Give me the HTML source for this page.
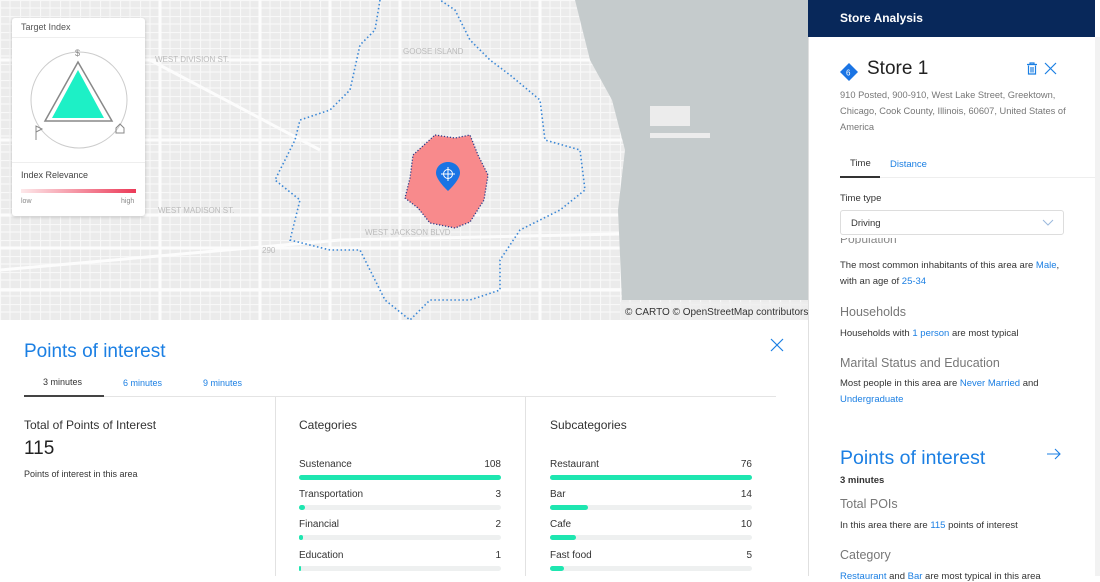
<!DOCTYPE html>
<html><head><meta charset="utf-8"><style>
*{box-sizing:border-box;margin:0;padding:0}
body{width:1100px;height:576px;overflow:hidden;font-family:"Liberation Sans",sans-serif;background:#fff;position:relative;color:#222}
.abs{position:absolute}
.blue{color:#1b7fe3}
.bar{position:absolute;height:5px;background:#eef0f0;border-radius:3px}
.bar i{display:block;height:5px;background:#1ee6b0;border-radius:3px}
.lbl{position:absolute;font-size:10px;color:#333}
.num{position:absolute;font-size:10px;color:#333;text-align:right}
</style></head><body>
<svg class="abs" style="left:0;top:0" width="808" height="320">
<defs>
<pattern id="g" width="20" height="16" patternUnits="userSpaceOnUse">
<rect width="20" height="16" fill="#ebebeb"/>
<path d="M0 0.5H20M0.5 0V16M10 0V16M0 8H20" stroke="#f8f8f8" stroke-width="1.2"/>
</pattern>
</defs>
<rect width="808" height="320" fill="url(#g)"/>
<g stroke="#fcfcfc" stroke-width="3">
<path d="M0 60H808M0 140H808M0 215H808M0 248H808M0 290H808M160 0V320M260 0V320M400 0V320M540 0V320M330 0V320"/>
<path d="M150 60L320 150M0 270L340 240L808 230" fill="none"/>
</g>
<path d="M575 0H808V300H622L618 210L625 150L612 100L590 60Z" fill="#c5cbcc"/>
<path d="M650 106H690V126H650ZM650 133H710V138H650Z" fill="#ececec"/>
<path d="M380 0L375 30L360 45L350 90L330 110L300 120L295 140L275 180L300 200L290 240L330 250L360 250L385 300L410 320L430 300L470 300L500 290L500 260L520 230L560 210L585 190L580 150L545 140L540 100L510 75L490 60L470 40L455 10L440 0" fill="none" stroke="#3a87d6" stroke-width="1.6" stroke-dasharray="1.5 2.5"/>
<path d="M435 135L455 138L470 135L478 155L488 175L484 200L470 222L455 228L430 223L418 208L405 198L410 178L413 155Z" fill="#f88a8c" stroke="#2b3d8a" stroke-width="1.3" stroke-dasharray="1.2 1.8"/>
<path d="M448 162c-7 0-12 5-12 11 0 7 12 18 12 18s12-11 12-18c0-6-5-11-12-11z" fill="#1a74e4"/>
<circle cx="448" cy="174" r="4.5" fill="none" stroke="#fff" stroke-width="1"/>
<path d="M441 174H455M448 167V181" stroke="#fff" stroke-width="1"/>
<rect x="620" y="302" width="188" height="18" fill="#eeeeee" opacity=".8"/>
<text x="625" y="315" font-size="10" fill="#333" font-family="Liberation Sans">© CARTO © OpenStreetMap contributors</text>
<g font-size="8" fill="#bbb" font-family="Liberation Sans"><text x="155" y="62">WEST DIVISION ST.</text><text x="158" y="213">WEST MADISON ST.</text><text x="403" y="54">GOOSE ISLAND</text><text x="365" y="235">WEST JACKSON BLVD</text><text x="262" y="253">290</text></g>
</svg>
<div class="abs" style="left:12px;top:18px;width:133px;height:198px;background:#fff;border-radius:3px;box-shadow:0 1px 3px rgba(0,0,0,.2)">
<div style="font-size:9px;color:#555;padding:4px 9px;height:20px;border-bottom:1px solid #eee">Target Index</div>
<svg class="abs" style="left:0;top:0" width="133" height="150">
<circle cx="67" cy="82" r="48" fill="none" stroke="#ccc"/>
<text x="63" y="38" font-size="9" fill="#888">$</text>
<path d="M66 44L33 103H100Z" fill="#fff" stroke="#888" stroke-width="1.5"/>
<path d="M66 52L40 100H92Z" fill="#1df0c6"/>
<path d="M24 122V108L30 111L24 114" fill="none" stroke="#888"/>
<path d="M104 115V110L108 106L112 110V115Z" fill="none" stroke="#888"/>
</svg>
<div class="abs" style="left:0;top:144px;width:133px;border-top:1px solid #eee"></div>
<div class="abs" style="left:9px;top:152px;font-size:9px;color:#444">Index Relevance</div>
<div class="abs" style="left:9px;top:171px;width:115px;height:4px;background:linear-gradient(90deg,#fde8ea,#ec3a58)"></div>
<div class="abs" style="left:9px;top:180px;font-size:7px;color:#888">low</div>
<div class="abs" style="left:109px;top:180px;font-size:7px;color:#888">high</div>
</div>

<div class="abs" style="left:24px;top:341px;font-size:19px" ><span class="blue">Points of interest</span></div>
<svg class="abs" style="left:770px;top:338px" width="14" height="14"><path d="M1 1L13 13M13 1L1 13" stroke="#1b7fe3" stroke-width="1.2"/></svg>
<div class="abs" style="left:43px;top:377px;font-size:9px;color:#333">3 minutes</div>
<div class="abs blue" style="left:123px;top:378px;font-size:9px">6 minutes</div>
<div class="abs blue" style="left:203px;top:378px;font-size:9px">9 minutes</div>
<div class="abs" style="left:24px;top:396px;width:752px;height:1px;background:#e4e4e4"></div>
<div class="abs" style="left:24px;top:395px;width:80px;height:2px;background:#444"></div>
<div class="abs" style="left:275px;top:397px;width:1px;height:179px;background:#e2e2e2"></div>
<div class="abs" style="left:525px;top:397px;width:1px;height:179px;background:#e2e2e2"></div>
<div class="abs" style="left:24px;top:418px;font-size:12px;color:#333">Total of Points of Interest</div>
<div class="abs" style="left:24px;top:438px;font-size:19px;color:#222">115</div>
<div class="abs" style="left:24px;top:469px;font-size:9px;color:#333">Points of interest in this area</div>
<div class="abs" style="left:299px;top:418px;font-size:12px;color:#333">Categories</div>
<div class="abs" style="left:550px;top:418px;font-size:12px;color:#333">Subcategories</div>

<div class="lbl" style="left:299px;top:459px">Sustenance</div><div class="num" style="left:460px;top:459px;width:41px">108</div>
<div class="bar" style="left:299px;top:475px;width:202px"><i style="width:100%"></i></div>
<div class="lbl" style="left:299px;top:489px">Transportation</div><div class="num" style="left:460px;top:489px;width:41px">3</div>
<div class="bar" style="left:299px;top:505px;width:202px"><i style="width:3%"></i></div>
<div class="lbl" style="left:299px;top:519px">Financial</div><div class="num" style="left:460px;top:519px;width:41px">2</div>
<div class="bar" style="left:299px;top:535px;width:202px"><i style="width:2%"></i></div>
<div class="lbl" style="left:299px;top:550px">Education</div><div class="num" style="left:460px;top:550px;width:41px">1</div>
<div class="bar" style="left:299px;top:566px;width:202px"><i style="width:1%"></i></div>

<div class="lbl" style="left:550px;top:459px">Restaurant</div><div class="num" style="left:712px;top:459px;width:40px">76</div>
<div class="bar" style="left:550px;top:475px;width:202px"><i style="width:100%"></i></div>
<div class="lbl" style="left:550px;top:489px">Bar</div><div class="num" style="left:712px;top:489px;width:40px">14</div>
<div class="bar" style="left:550px;top:505px;width:202px"><i style="width:19%"></i></div>
<div class="lbl" style="left:550px;top:519px">Cafe</div><div class="num" style="left:712px;top:519px;width:40px">10</div>
<div class="bar" style="left:550px;top:535px;width:202px"><i style="width:13%"></i></div>
<div class="lbl" style="left:550px;top:550px">Fast food</div><div class="num" style="left:712px;top:550px;width:40px">5</div>
<div class="bar" style="left:550px;top:566px;width:202px"><i style="width:7%"></i></div>

<div class="abs" style="left:808px;top:0;width:292px;height:576px;background:#fff;border-left:1px solid #e0e0e0"></div>
<div class="abs" style="left:1095px;top:37px;width:5px;height:539px;background:#f2f2f2"></div>
<div class="abs" style="left:808px;top:0;width:287px;height:37px;background:#08285a;color:#fff;font-size:12px;font-weight:bold;padding:11px 0 0 32px">Store Analysis</div>
<svg class="abs" style="left:839px;top:62px" width="20" height="20"><path d="M10 1L19 10L10 19L1 10Z" fill="#1a74e4"/><text x="7" y="13.5" font-size="8" fill="#fff">6</text></svg>
<div class="abs" style="left:867px;top:58px;font-size:19px;color:#222">Store 1</div>
<svg class="abs" style="left:1026px;top:62px" width="12" height="13"><path d="M1 2.5H11M4 2.5V1H8V2.5M2.5 3.5V12H9.5V3.5M5 5V10.5M7 5V10.5" fill="none" stroke="#1b7fe3" stroke-width="1.2"/></svg>
<svg class="abs" style="left:1044px;top:62px" width="13" height="13"><path d="M1 1L12 12M12 1L1 12" stroke="#1b7fe3" stroke-width="1.2"/></svg>
<div class="abs" style="left:840px;top:87px;width:228px;font-size:9.3px;line-height:16px;color:#777">910 Posted, 900-910, West Lake Street, Greektown, Chicago, Cook County, Illinois, 60607, United States of America</div>
<div class="abs" style="left:850px;top:158px;font-size:9.5px;color:#333">Time</div>
<div class="abs blue" style="left:890px;top:159px;font-size:9.5px">Distance</div>
<div class="abs" style="left:840px;top:176px;width:40px;height:2px;background:#333"></div>
<div class="abs" style="left:880px;top:177px;width:215px;height:1px;background:#eee"></div>
<div class="abs" style="left:840px;top:193px;font-size:9.5px;color:#333">Time type</div>
<div class="abs" style="left:840px;top:210px;width:224px;height:25px;border:1px solid #ddd;border-radius:3px;font-size:9.5px;color:#333;padding:7px 0 0 10px">Driving</div>
<svg class="abs" style="left:1042px;top:219px" width="12" height="7"><path d="M1 1L6 6L11 1" fill="none" stroke="#9bb9dd"/></svg>
<div class="abs" style="left:840px;top:238px;font-size:12px;color:#888;height:6px;overflow:hidden;line-height:2px">Population</div>
<div class="abs" style="left:840px;top:258px;width:232px;font-size:9.5px;line-height:16px;color:#333">The most common inhabitants of this area are <span class="blue">Male</span>, with an age of <span class="blue">25-34</span></div>
<div class="abs" style="left:840px;top:305px;font-size:12.5px;color:#777">Households</div>
<div class="abs" style="left:840px;top:328px;font-size:9.5px;color:#333">Households with <span class="blue">1 person</span> are most typical</div>
<div class="abs" style="left:840px;top:356px;font-size:12.5px;color:#777">Marital Status and Education</div>
<div class="abs" style="left:840px;top:376px;width:240px;font-size:9.5px;line-height:16px;color:#333">Most people in this area are <span class="blue">Never Married</span> and <span class="blue">Undergraduate</span></div>
<div class="abs blue" style="left:840px;top:447px;font-size:19.5px">Points of interest</div>
<svg class="abs" style="left:1046px;top:448px" width="15" height="12"><path d="M1 6H14M9 1L14 6L9 11" fill="none" stroke="#1b7fe3" stroke-width="1.1"/></svg>
<div class="abs" style="left:840px;top:475px;font-size:9.5px;color:#333;font-weight:bold">3 minutes</div>
<div class="abs" style="left:840px;top:497px;font-size:12.5px;color:#777">Total POIs</div>
<div class="abs" style="left:840px;top:520px;font-size:9.5px;color:#333">In this area there are <span class="blue">115</span> points of interest</div>
<div class="abs" style="left:840px;top:548px;font-size:12.5px;color:#777">Category</div>
<div class="abs" style="left:840px;top:571px;font-size:9.5px;color:#333"><span class="blue">Restaurant</span> and <span class="blue">Bar</span> are most typical in this area</div>
</body></html>
